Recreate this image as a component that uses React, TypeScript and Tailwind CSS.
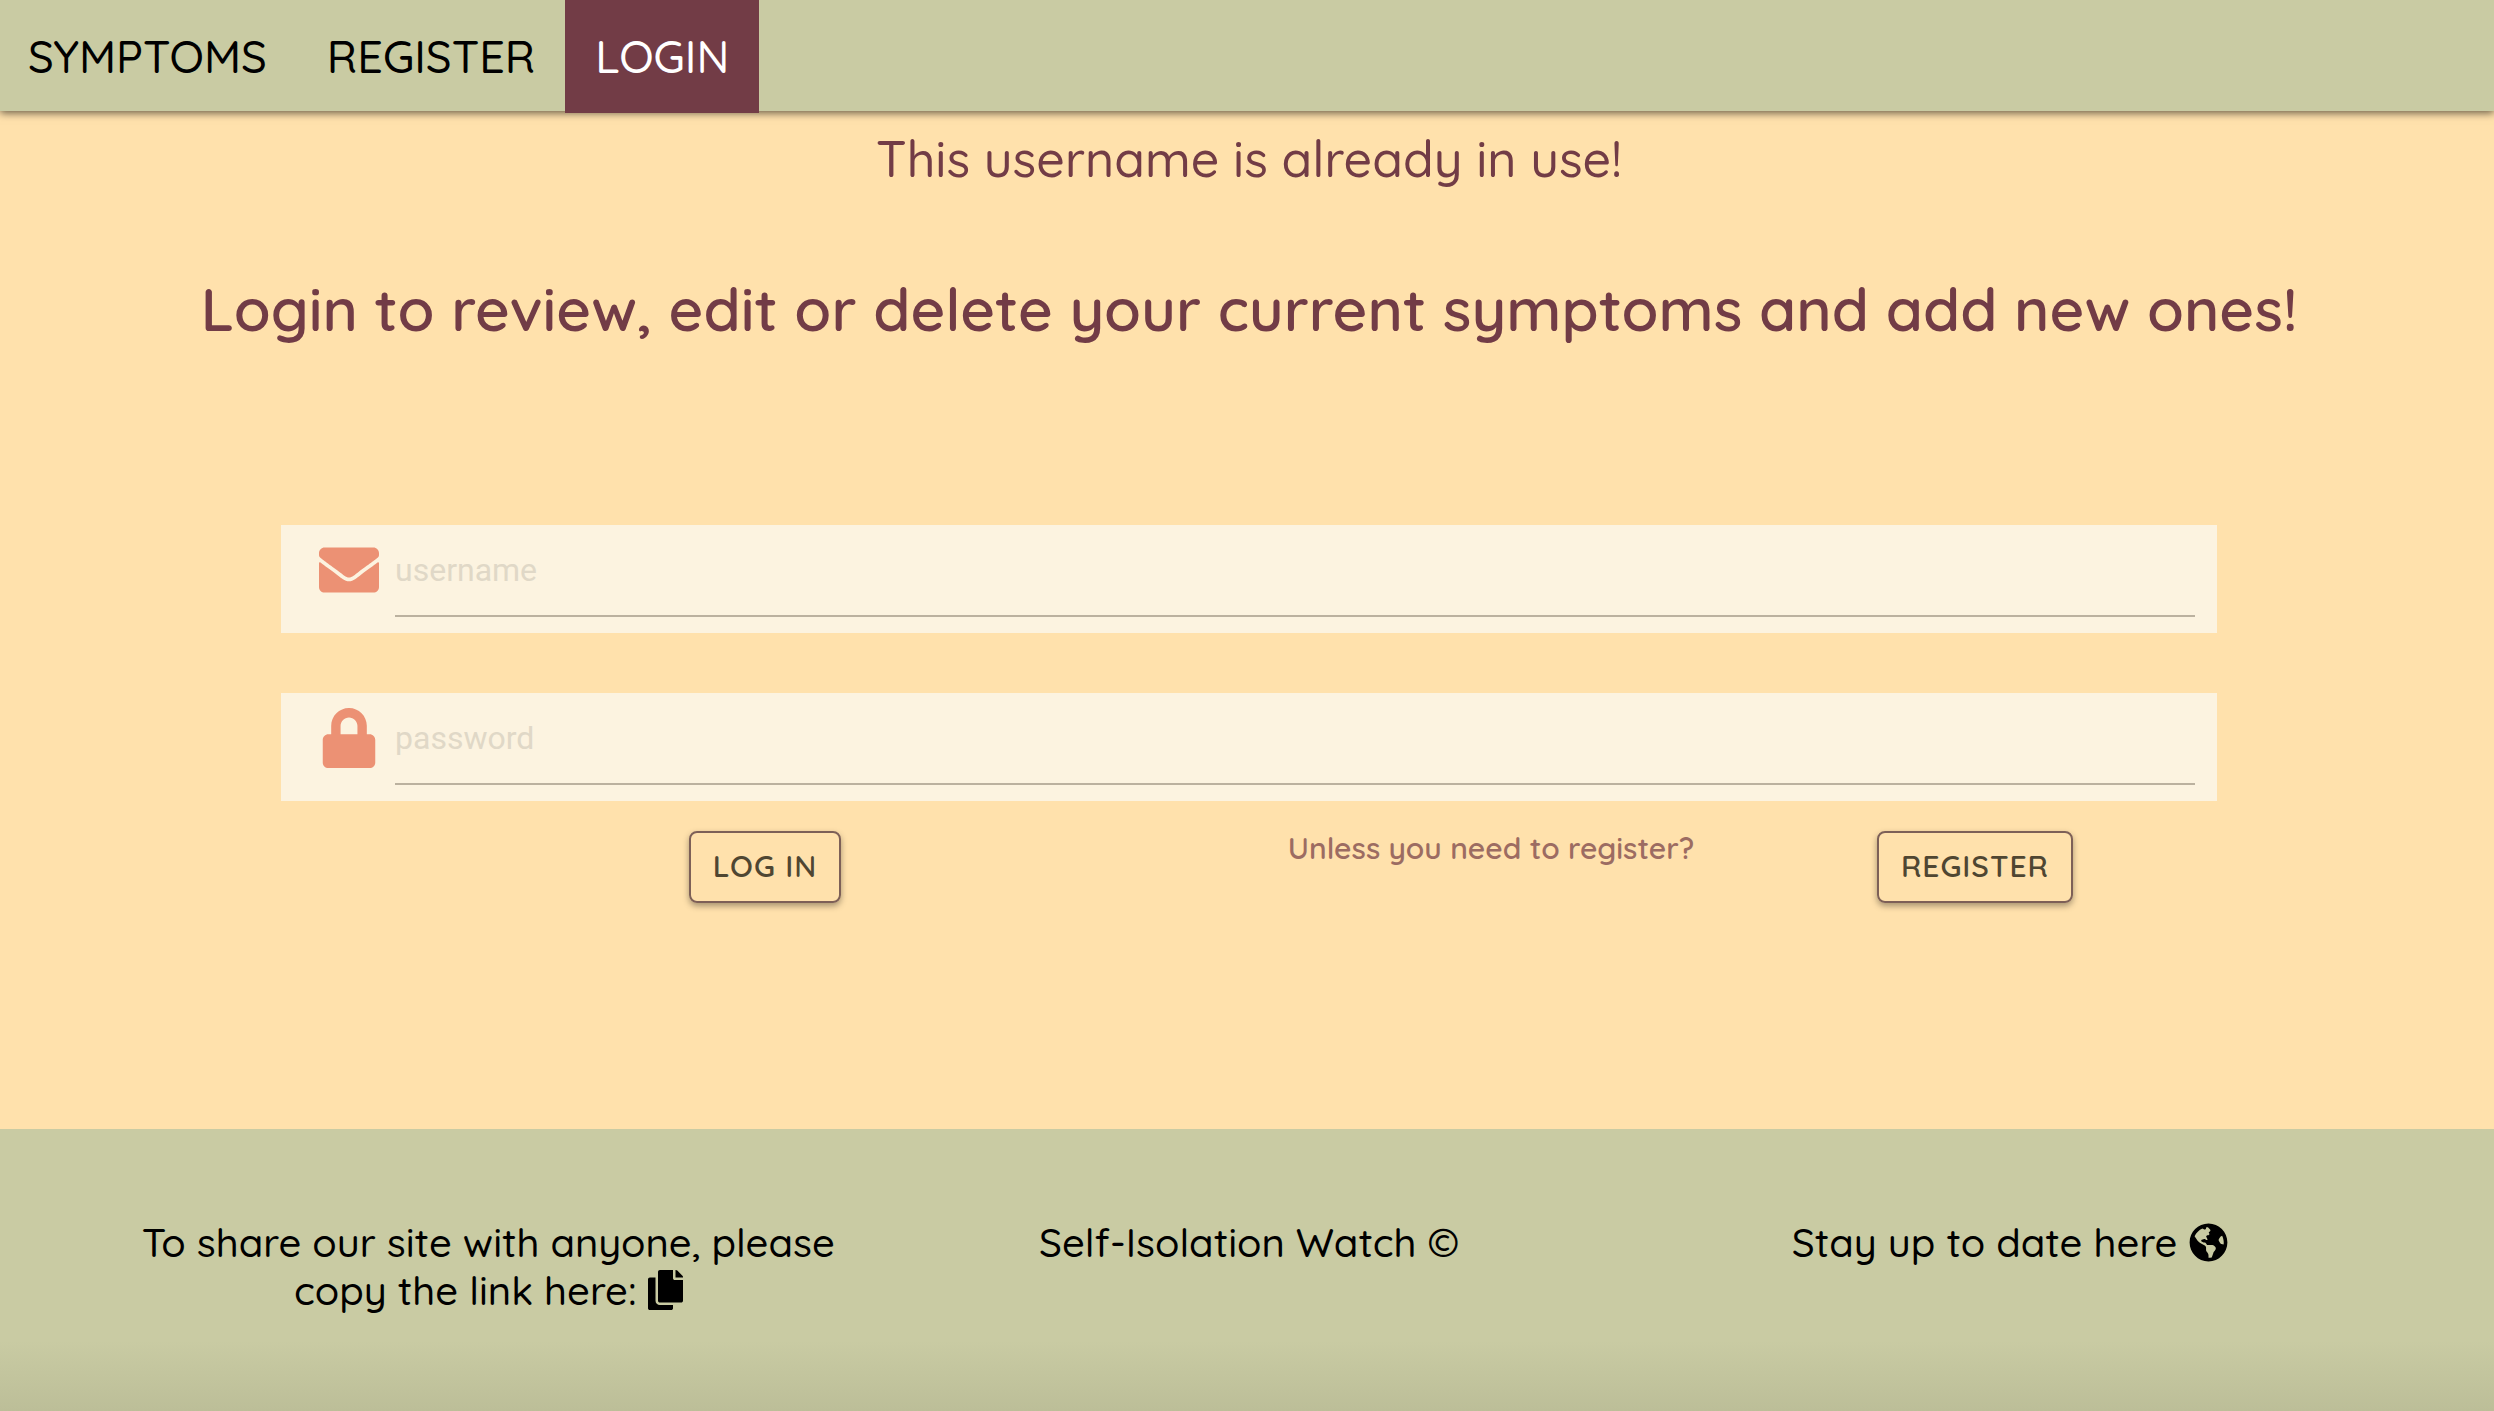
import { FaEnvelope, FaLock, FaCopy, FaGlobeAmericas } from "react-icons/fa";
import type { IconType } from "react-icons";

const navLinks = ["SYMPTOMS", "REGISTER", "LOGIN"];

function Field({ name, type, Icon }: { name: string; type: string; Icon: IconType }) {
  return (
    <div className="flex h-[108px] items-start bg-[#fcf3e0] pr-[22px] pl-[38px]">
      <label htmlFor={name} aria-label={name} className="mt-[15px] mr-4 text-[#ec9174]">
        <Icon size={60} />
      </label>
      <input
        id={name}
        type={type}
        placeholder={name}
        className="h-[92px] min-w-0 flex-1 border-b-2 border-[#bbb19f] bg-transparent font-[Roboto,sans-serif] text-[32px] text-[#4f4a3a] outline-none placeholder:text-[#e0d8c7]"
      />
    </div>
  );
}

const buttonClass =
  "h-[72px] rounded-lg border-2 border-[#7d6057] px-[22px] pb-0.5 text-[30px] font-semibold tracking-[1px] text-[#4f4632] shadow-[0_3px_6px_rgba(0,0,0,0.35)]";

export default function App() {
  return (
    <div className="flex min-h-screen flex-col bg-[#ffe1ac] font-[Quicksand,Lato,sans-serif]">
      <nav className="flex h-[111px] bg-[#c9cba3] shadow-[0_2px_8px_rgba(0,0,0,0.6)]">
        {navLinks.map((label) => (
          <a
            key={label}
            href={`#${label.toLowerCase()}`}
            className={
              label === "LOGIN"
                ? "flex h-[113px] items-center bg-[#723c46] px-[30px] text-[45px] font-medium text-white"
                : "flex h-[113px] items-center px-[30px] text-[45px] font-medium text-black first:pl-7"
            }
          >
            {label}
          </a>
        ))}
      </nav>

      <main className="flex-1 pl-1 text-[#723c46]">
        <p className="pt-4 text-center text-[50px] leading-[64px] font-medium">
          This username is already in use!
        </p>
        <h1 className="mt-20 text-center text-[60px] leading-[76px] font-semibold">
          Login to review, edit or delete your current symptoms and add new ones!
        </h1>
        <form className="mx-auto mt-[178px] w-[1936px] max-w-full" onSubmit={(e) => e.preventDefault()}>
          <div className="flex flex-col gap-[60px]">
            <Field name="username" type="text" Icon={FaEnvelope} />
            <Field name="password" type="password" Icon={FaLock} />
          </div>
          <div className="mt-[30px] grid grid-cols-4 items-start">
            <div className="col-span-2 flex justify-center">
              <button type="submit" className={buttonClass}>LOG IN</button>
            </div>
            <p className="text-center text-[30px] leading-[34px] font-semibold text-[#9c6c62]">
              Unless you need to register?
            </p>
            <div className="flex justify-center">
              <button type="button" className={buttonClass}>REGISTER</button>
            </div>
          </div>
        </form>
      </main>

      <footer className="grid h-[282px] grid-cols-3 bg-linear-to-b from-[#c9cba3] from-75% to-[#bcbe98] pt-[89px] pr-26 pl-27 text-center text-[40px] leading-[48px] font-medium text-black">
        <p>
          To share our site with anyone, please
          <br />
          copy the link here:{" "}
          <button type="button" aria-label="Copy link">
            <FaCopy className="inline h-10 w-[35px] align-[-0.125em]" />
          </button>
        </p>
        <p>Self-Isolation Watch ©</p>
        <p>
          Stay up to date here{" "}
          <a href="#news" aria-label="News">
            <FaGlobeAmericas size={39} className="inline align-[-0.125em]" />
          </a>
        </p>
      </footer>
    </div>
  );
}
